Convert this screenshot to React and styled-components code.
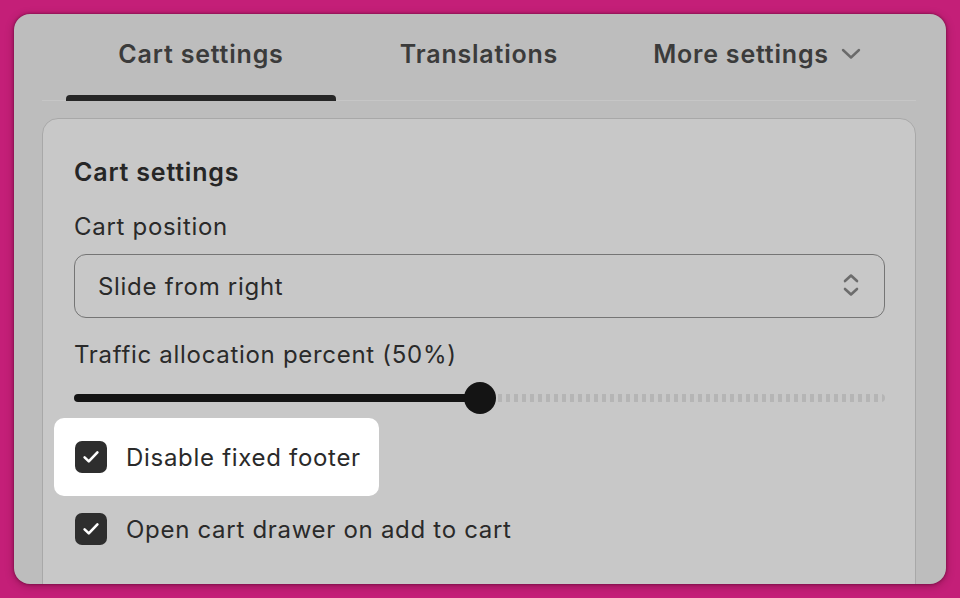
import React from "react";
import styled, { createGlobalStyle } from "styled-components";

const GlobalStyle = createGlobalStyle`
  html, body {
    margin: 0;
    padding: 0;
    background: #c41f78;
    font-family: "Inter", "Noto Sans", sans-serif;
  }
`;

const Page = styled.div`
  width: 960px;
  height: 598px;
  padding: 14px;
  box-sizing: border-box;
  background: #c41f78;
`;

const Window = styled.div`
  height: 570px;
  box-sizing: border-box;
  background: #bdbdbd;
  border-radius: 16px;
  overflow: hidden;
  padding: 0 30px 0 28px;
  box-shadow: 0 0 3px rgba(60, 0, 30, 0.6), 0 2px 8px rgba(60, 0, 30, 0.35);
`;

const TabList = styled.div`
  display: flex;
  gap: 8px;
  padding-left: 24px;
  border-bottom: 1px solid #c6c6c6;
`;

const Tab = styled.div`
  position: relative;
  width: 270px;
  height: 86px;
  display: flex;
  align-items: center;
  justify-content: center;
  gap: 12px;
  padding-bottom: 6px;
  box-sizing: border-box;
  font-size: 25px;
  letter-spacing: 0.8px;
  font-weight: 600;
  color: #3b3b3b;

  &::after {
    content: "";
    position: absolute;
    left: 0;
    right: 0;
    bottom: -1px;
    height: 6px;
    border-radius: 4px 4px 0 0;
    background: ${({ active }) => (active ? "#262626" : "transparent")};
  }
`;

const Card = styled.div`
  margin-top: 17px;
  border: 1px solid #a8a8a8;
  border-radius: 16px;
  background: #c8c8c8;
  padding: 38px 30px 80px 31px;
  color: #2a2a2a;
`;

const Heading = styled.h2`
  margin: 0;
  font-size: 25px;
  letter-spacing: 0.8px;
  line-height: 30px;
  font-weight: 600;
  color: #262626;
`;

const Label = styled.div`
  font-size: 24px;
  letter-spacing: 0.7px;
  line-height: 28px;
  margin-top: ${({ top }) => top}px;
`;

const Select = styled.div`
  margin-top: 13px;
  height: 64px;
  box-sizing: border-box;
  border: 1px solid #757575;
  border-radius: 12px;
  display: flex;
  align-items: center;
  justify-content: space-between;
  padding: 0 25px 0 23px;
  font-size: 24px;
  letter-spacing: 0.7px;
`;

const Slider = styled.div`
  margin-top: 13px;
  height: 32px;
  display: flex;
  align-items: center;
`;

const Filled = styled.div`
  position: relative;
  height: 8px;
  border-radius: 4px 0 0 4px;
  background: #141414;
`;

const Thumb = styled.div`
  position: absolute;
  right: -16px;
  top: -12px;
  width: 32px;
  height: 32px;
  border-radius: 50%;
  background: #141414;
`;

const Rest = styled.div`
  flex: 1;
  height: 8px;
  margin-left: 18px;
  border-radius: 0 4px 4px 0;
  background: repeating-linear-gradient(
    to right,
    #b5b5b5 0 4px,
    transparent 4px 8px
  );
`;

const CheckRow = styled.div`
  display: inline-flex;
  align-items: center;
  gap: 19px;
  align-self: flex-start;
  margin-left: -20px;
  padding: 0 18px 0 21px;
  height: ${({ tall }) => (tall ? 78 : 60)}px;
  margin-top: ${({ top }) => top}px;
  border-radius: 10px;
  background: ${({ highlight }) => (highlight ? "#ffffff" : "transparent")};
  font-size: 24px;
  letter-spacing: 0.7px;
`;

const Box = styled.div`
  width: 32px;
  height: 32px;
  border-radius: 7px;
  background: #2e2e2e;
  display: flex;
  align-items: center;
  justify-content: center;
`;

const Stack = styled.div`
  display: flex;
  flex-direction: column;
`;

const Check = () => (
  <Box>
    <svg width="20" height="20" viewBox="0 0 20 20">
      <polyline
        points="3.6,10.4 7.8,14.4 16.4,5.4"
        fill="none"
        stroke="#fff"
        strokeWidth="2.6"
        strokeLinecap="round"
        strokeLinejoin="round"
      />
    </svg>
  </Box>
);

const UpDown = () => (
  <svg width="16" height="26" viewBox="0 0 16 26">
    <polyline points="2,8 8,2.5 14,8" fill="none" stroke="#6c6c6c" strokeWidth="2.6" strokeLinecap="round" strokeLinejoin="round" />
    <polyline points="2,16 8,21.5 14,16" fill="none" stroke="#6c6c6c" strokeWidth="2.6" strokeLinecap="round" strokeLinejoin="round" />
  </svg>
);

const ChevronDown = () => (
  <svg width="20" height="12" viewBox="0 0 20 12">
    <polyline points="2,2 10,9.5 18,2" fill="none" stroke="#6a6a6a" strokeWidth="2.4" strokeLinecap="round" strokeLinejoin="round" />
  </svg>
);

const App = () => {
  const percent = 50;
  return (
    <>
      <GlobalStyle />
      <Page>
        <Window>
          <TabList>
            <Tab active>Cart settings</Tab>
            <Tab>Translations</Tab>
            <Tab>
              More settings
              <ChevronDown />
            </Tab>
          </TabList>
          <Card>
            <Stack>
              <Heading>Cart settings</Heading>
              <Label top={26}>Cart position</Label>
              <Select>
                Slide from right
                <UpDown />
              </Select>
              <Label top={23}>Traffic allocation percent ({percent}%)</Label>
              <Slider>
                <Filled style={{ width: `${percent}%` }}>
                  <Thumb />
                </Filled>
                <Rest />
              </Slider>
              <CheckRow highlight tall top={4}>
                <Check />
                Disable fixed footer
              </CheckRow>
              <CheckRow top={3}>
                <Check />
                Open cart drawer on add to cart
              </CheckRow>
            </Stack>
          </Card>
        </Window>
      </Page>
    </>
  );
};

export default App;
